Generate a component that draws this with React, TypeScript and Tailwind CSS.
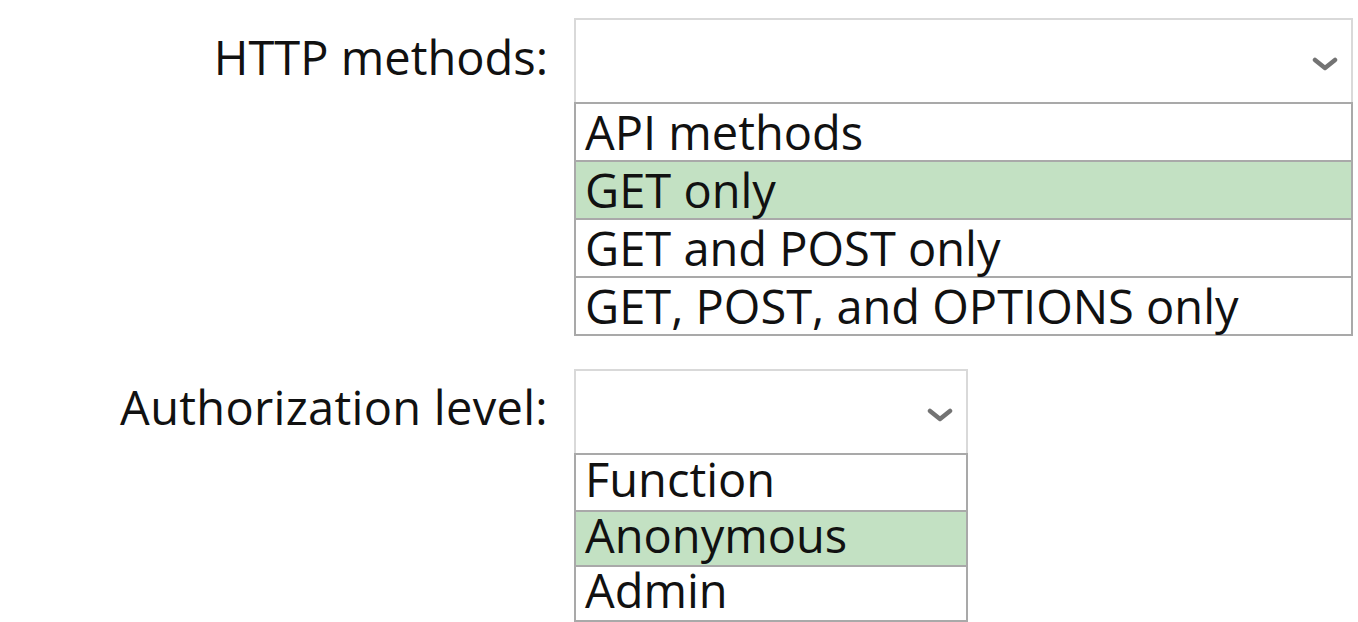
const httpOptions = ["API methods", "GET only", "GET and POST only", "GET, POST, and OPTIONS only"];
const authOptions = ["Function", "Anonymous", "Admin"];

function Chevron() {
	return (
		<svg width="26" height="16" viewBox="0 0 26 16" fill="none" className="shrink-0">
			<polyline points="3,4 13,12 23,4" stroke="#737373" strokeWidth="4.5" strokeLinecap="round" strokeLinejoin="round" />
		</svg>
	);
}

function Dropdown({
	options,
	selected,
	width,
	rowClass,
}: {
	options: string[];
	selected: number;
	width: string;
	rowClass: string;
}) {
	return (
		<div className={width}>
			<div className="flex h-[84px] items-center justify-end border-2 border-b-0 border-[#d9d9d9] pr-[13px] pt-[5px]">
				<Chevron />
			</div>
			<ul className="border-2 border-[#a9a9a9]">
				{options.map((opt, i) => (
					<li
						key={opt}
						className={`${rowClass} whitespace-nowrap pl-[9px] ${i > 0 ? "border-t-2 border-[#a9a9a9]" : ""} ${
							i === selected ? "bg-[#c3e1c3]" : "bg-white"
						}`}>
						{opt}
					</li>
				))}
			</ul>
		</div>
	);
}

export default function App() {
	return (
		<div className="h-[622px] w-[1358px] overflow-hidden bg-white font-['Open_Sans',sans-serif] text-[47px] text-[#111111]">
			<div className="flex flex-col gap-[33px] pt-[18px]">
				<div className="flex items-start gap-[26px]">
					<div className="flex h-[84px] w-[548px] items-center justify-end pb-[6px] leading-none">HTTP methods:</div>
					<Dropdown options={httpOptions} selected={1} width="w-[779px]" rowClass="h-[58px] leading-[56px] first:h-[56px]" />
				</div>
				<div className="flex items-start gap-[26px]">
					<div className="flex h-[84px] w-[548px] items-center justify-end pb-[8px] leading-none tracking-[0.3px]">
						Authorization level:
					</div>
					<Dropdown options={authOptions} selected={1} width="w-[394px]" rowClass="h-[55px] leading-[47px] first:leading-[49px]" />
				</div>
			</div>
		</div>
	);
}
